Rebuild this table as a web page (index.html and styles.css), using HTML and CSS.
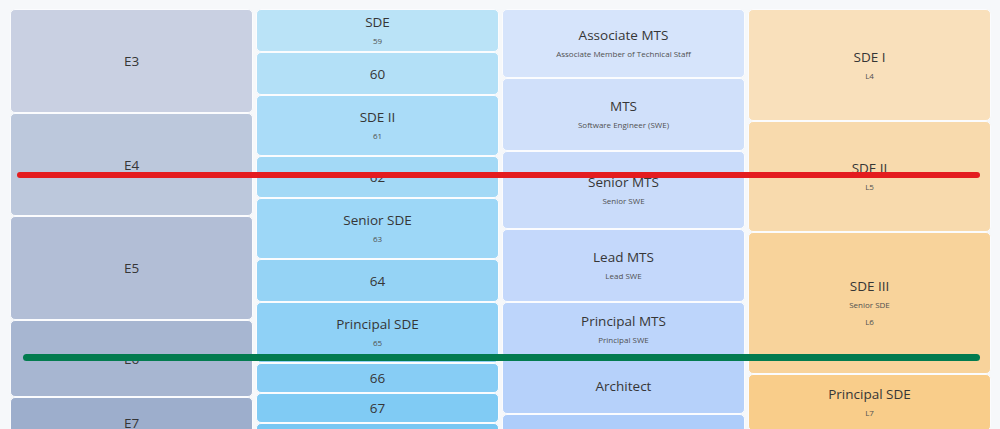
FILE: index.html
```html
<!DOCTYPE html>
<html lang="en">
<head>
<meta charset="utf-8">
<title>Levels</title>
<link rel="stylesheet" href="styles.css">
</head>
<body>
<div class="board">
  <div class="col col-meta">
    <div class="cell m1" style="height:104px"><div class="title">E3</div></div>
    <div class="cell m2" style="height:103px"><div class="title">E4</div></div>
    <div class="cell m3" style="height:104px"><div class="title">E5</div></div>
    <div class="cell m4" style="height:77px"><div class="title">E6</div></div>
    <div class="cell m5" style="height:51px"><div class="title">E7</div></div>
  </div>
  <div class="col col-ms">
    <div class="cell s1" style="height:43px"><div class="title">SDE</div><div class="sub">59</div></div>
    <div class="cell s2" style="height:43px"><div class="title">60</div></div>
    <div class="cell s3" style="height:61px"><div class="title">SDE II</div><div class="sub">61</div></div>
    <div class="cell s4" style="height:42px"><div class="title">62</div></div>
    <div class="cell s5" style="height:61px"><div class="title">Senior SDE</div><div class="sub">63</div></div>
    <div class="cell s6" style="height:43px"><div class="title">64</div></div>
    <div class="cell s7" style="height:61px"><div class="title">Principal SDE</div><div class="sub">65</div></div>
    <div class="cell s8" style="height:30px"><div class="title">66</div></div>
    <div class="cell s9" style="height:30px"><div class="title">67</div></div>
    <div class="cell s10" style="height:36px"><div class="title">Partner</div><div class="sub">68</div></div>
  </div>
  <div class="col col-sf">
    <div class="cell f1" style="height:69px"><div class="title">Associate MTS</div><div class="sub">Associate Member of Technical Staff</div></div>
    <div class="cell f2" style="height:73px"><div class="title">MTS</div><div class="sub">Software Engineer (SWE)</div></div>
    <div class="cell f3" style="height:78px"><div class="title">Senior MTS</div><div class="sub">Senior SWE</div></div>
    <div class="cell f4" style="height:73px"><div class="title">Lead MTS</div><div class="sub">Lead SWE</div></div>
    <div class="cell f5" style="height:55px"><div class="title">Principal MTS</div><div class="sub">Principal SWE</div></div>
    <div class="cell f6" style="height:57px"><div class="title">Architect</div></div>
    <div class="cell f7" style="height:60px"><div class="title">Senior Architect</div></div>
  </div>
  <div class="col col-amz">
    <div class="cell a1" style="height:112px"><div class="title">SDE I</div><div class="sub">L4</div></div>
    <div class="cell a2" style="height:111px"><div class="title">SDE II</div><div class="sub">L5</div></div>
    <div class="cell a3" style="height:142px"><div class="title">SDE III</div><div class="sub">Senior SDE</div><div class="sub">L6</div></div>
    <div class="cell a4" style="height:57px"><div class="title">Principal SDE</div><div class="sub">L7</div></div>
  </div>
  <div class="marker marker-red"></div>
  <div class="marker marker-green"></div>
</div>
</body>
</html>
```
FILE: styles.css
```css
* { box-sizing: border-box; }
html, body {
  margin: 0;
  padding: 0;
  background: #f6f8fa;
  overflow: hidden;
  height: 429px;
}
body {
  font-family: "Open Sans", "Noto Sans", sans-serif;
  color: #3b3b3b;
}
.board {
  position: relative;
  display: grid;
  grid-template-columns: repeat(4, 243px);
  column-gap: 3px;
  padding: 9px 0 0 10px;
  width: 1000px;
}
.col {
  display: flex;
  flex-direction: column;
}
.cell {
  flex: none;
  display: flex;
  flex-direction: column;
  align-items: center;
  justify-content: center;
  border: 1px solid #fbfcfe;
  border-radius: 5px;
  text-align: center;
}
.title {
  font-size: 13.5px;
  line-height: 16px;
  color: #363636;
}
.sub {
  font-size: 8px;
  line-height: 13px;
  margin-top: 4px;
  color: #505050;
}
.m1 { background: #c9d0e2; }
.m2 { background: #bcc8dc; }
.m3 { background: #b2bed6; }
.m4 { background: #a7b6d1; }
.m5 { background: #9daecc; }

.s1 { background: #bae3f7; }
.s2 { background: #b3e0f7; }
.s3 { background: #aadcf8; }
.s4 { background: #a3d9f6; }
.s5 { background: #9dd7f7; }
.s6 { background: #95d3f5; }
.s7 { background: #8fd1f6; }
.s8 { background: #87cdf5; }
.s9 { background: #80cbf4; }
.s10 { background: #78c7f3; }

.f1 { background: #d6e4fb; }
.f2 { background: #d0e0fa; }
.f3 { background: #cadcfa; }
.f4 { background: #c4d8fb; }
.f5 { background: #bdd5fb; }
.f6 { background: #b6d1fa; }
.f7 { background: #aecdfa; }

.a1 { background: #f9e0bb; }
.a2 { background: #f8daad; }
.a3 { background: #f8d39b; }
.a4 { background: #f9cd8a; }

.marker {
  position: absolute;
  height: 6px;
  border-radius: 3px;
}
.marker-red {
  left: 17px;
  width: 963px;
  top: 172px;
  background: #e41c1f;
}
.marker-green {
  left: 23px;
  width: 957px;
  top: 354px;
  height: 7px;
  border-radius: 4px;
  background: #027b4f;
}
```
